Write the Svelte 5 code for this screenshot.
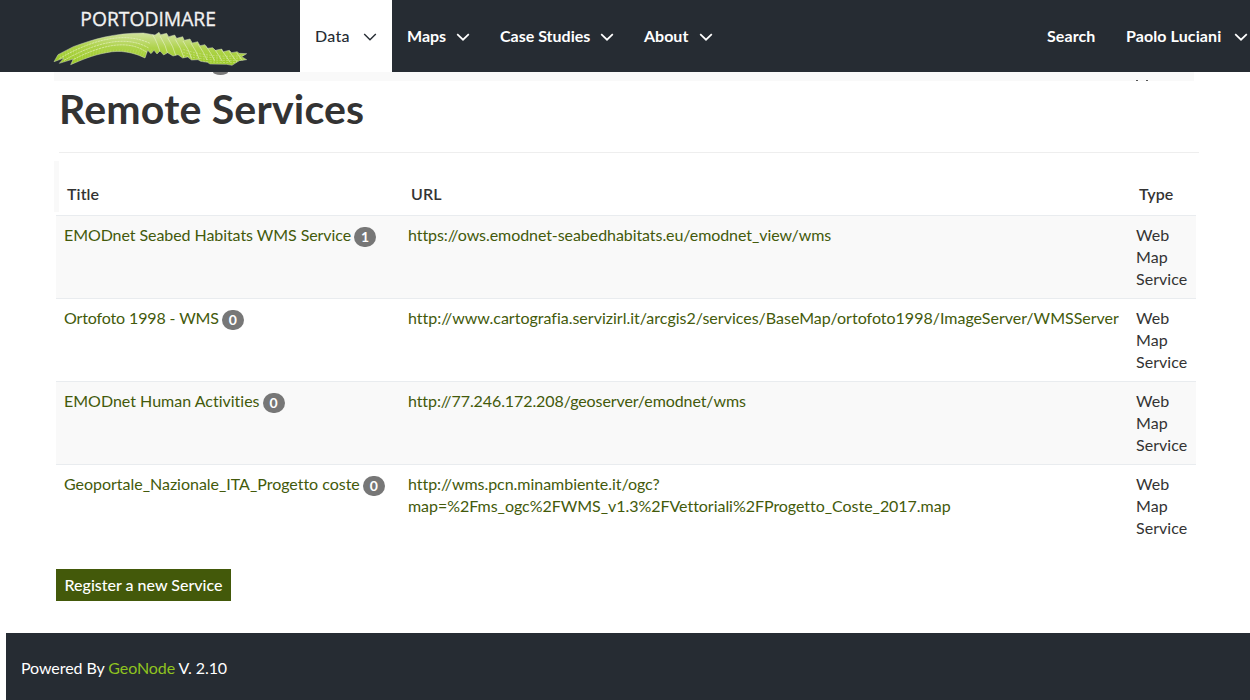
<script>
  const menu = [
    { label: 'Data', active: true, w: 92 },
    { label: 'Maps', w: 93 },
    { label: 'Case Studies', w: 144 },
    { label: 'About', w: 99 }
  ];
  const services = [
    { title: 'EMODnet Seabed Habitats WMS Service', track: -0.07, count: 1, url: ['https://ows.emodnet-seabedhabitats.eu/emodnet_view/wms'], urlTrack: -0.07 },
    { title: 'Ortofoto 1998 - WMS', track: -0.13, count: 0, url: ['http://www.cartografia.servizirl.it/arcgis2/services/BaseMap/ortofoto1998/ImageServer/WMSServer'], urlTrack: 0 },
    { title: 'EMODnet Human Activities', track: 0, count: 0, url: ['http://77.246.172.208/geoserver/emodnet/wms'], urlTrack: -0.09 },
    { title: 'Geoportale_Nazionale_ITA_Progetto coste', track: -0.02, count: 0, url: ['http://wms.pcn.minambiente.it/ogc?', 'map=%2Fms_ogc%2FWMS_v1.3%2FVettoriali%2FProgetto_Coste_2017.map'], urlTrack: -0.035 }
  ];
  const wave = 'M42 185L54 164L100 140C160 118 220 99 310 99L345 105L357 97L362 104L380 100L386 110L404 105L410 115L428 110L433 121L450 117L457 129L473 125L480 137L495 134L503 145L518 143L526 151L545 147L550 155L568 151L575 158L592 155L597 160L620 161L605 170L620 179L598 182L576 196L560 193L510 192L502 187L482 184L474 179L455 180L443 171L428 174L414 164L399 168L383 158L371 165L360 153L351 162L342 151L333 161L323 151L315 174C280 157 240 149 200 158C155 166 125 180 92 194L100 177L58 190L72 174Z';
  const arcs = [0, 1, 2];
  const hatch = Array.from({ length: 34 }, (_, i) => i);
</script>

{#snippet chevron()}
  <svg class="chevron" viewBox="0 0 14 8" aria-hidden="true"><path d="M1.2 1.1L7 6.7L12.8 1.1" /></svg>
{/snippet}

<header>
  <div class="brand">
    <svg viewBox="0 0 660 216" role="img" aria-label="Portodimare">
      <defs>
        <linearGradient id="green" x1="0" y1="1" x2=".15" y2="0">
          <stop offset="0" stop-color="#96c81c" />
          <stop offset=".6" stop-color="#afd34c" />
          <stop offset="1" stop-color="#cfe19a" />
        </linearGradient>
        <clipPath id="waveClip"><path d={wave} /></clipPath>
      </defs>
      <text x="121" y="79" textLength="407" lengthAdjust="spacingAndGlyphs">PORTODIMARE</text>
      <path d={wave} fill="url(#green)" stroke="#cfd9bd" stroke-width="1.5" />
      <g clip-path="url(#waveClip)" fill="none">
        {#each arcs as i}
          <path d={`M${58 + i * 14} ${176 + i * 5}C${150 + i * 10} ${122 + i * 9} ${250 + i * 5} ${92 + i * 10} ${330 - i * 4} ${130 + i * 14}`} stroke="#eff6d4" stroke-width="2.5" stroke-dasharray="7 2" opacity=".7" />
        {/each}
        {#each hatch as i}
          <path d={`M${70 + i * 7.5} 200l${-14 + i * 1.2} -52`} stroke="#edf5cd" stroke-width="1.5" opacity=".28" />
        {/each}
        {#each [0, 1, 2, 3, 4, 5, 6, 7, 8, 9, 10, 11] as i}
          <path d={`M${337 + i * 23} ${103 + i * 5}q17 25 26 ${65 - i * 3}`} stroke="#f0f5dc" stroke-width="2.3" opacity=".7" />
        {/each}
        {#each [0, 1, 2, 3] as i}
          <path d={`M430 ${148 + i * 9}Q510 ${176 + i * 5} 620 ${166 + i * 7}`} stroke="#edf5cd" stroke-width="2" stroke-dasharray="6 4" opacity=".6" />
        {/each}
      </g>
    </svg>
  </div>
  <nav>
    {#each menu as item}
      <a class:active={item.active} style:width={`${item.w}px`}><span>{item.label}</span>{@render chevron()}</a>
    {/each}
  </nav>
  <div class="user">
    <span class="search">Search</span>
    <span class="name">Paolo Luciani</span>{@render chevron()}
  </div>
</header>

<div class="peek"><i></i><b></b><b></b></div>

<main>
  <h1><span>Remote Services</span></h1>
  <div class="head">
    <span>Title</span><span>URL</span><span>Type</span>
  </div>
  {#each services as s}
    <div class="row">
      <div class="title"><a style:letter-spacing={`${s.track}px`}>{s.title}</a><span class="badge">{s.count}</span></div>
      <div class="url" style:letter-spacing={`${s.urlTrack}px`}>{#each s.url as part}<a>{part}</a>{/each}</div>
      <div class="type">Web Map Service</div>
    </div>
  {/each}
  <button>Register a new Service</button>
</main>

<footer><p>Powered By <a>GeoNode</a> V. 2.10</p></footer>

<style>
  :global(body) { background: #fff; overflow: hidden; }
  :global(#app) { font: 16px/22px Lato, sans-serif; font-variant-ligatures: none; color: #333; width: 1250px; height: 700px; overflow: hidden; display: flex; flex-direction: column; }
  header { height: 72px; flex: none; background: #262c33; display: flex; color: #fff; font-weight: 700; }
  .brand { width: 260px; padding-left: 40px; box-sizing: content-box; }
  .brand svg { width: 220px; height: 72px; display: block; }
  .brand text { font: 62px "Open Sans", sans-serif; fill: #f2f2f2; stroke: #f2f2f2; stroke-width: 1; }
  nav { display: flex; }
  nav a { display: flex; align-items: center; justify-content: space-between; box-sizing: border-box; padding: 0 15px; white-space: nowrap; }
  nav span, .user span { margin-top: -1px; }
  nav a.active { background: #fff; color: #262c33; font-weight: 500; }
  nav a.active span { letter-spacing: .3px; }
  .chevron { width: 14px; height: 8px; flex: none; margin-top: 2px; fill: none; stroke: currentColor; stroke-width: 1.7; }
  nav a.active .chevron { stroke-width: 1.4; }
  .user { display: flex; align-items: center; margin-left: auto; padding-right: 2px; white-space: nowrap; letter-spacing: .1px; }
  .search { width: 79px; }
  .name { width: 108px; }
  .peek { height: 9px; flex: none; margin: 0 56px 0 54px; background: #f9f9f9; display: flex; }
  .peek i { width: 15px; height: 3px; margin-left: 159px; background: #777; border-radius: 0 0 50% 50% / 0 0 100% 100%; }
  .peek b { width: 2px; height: 1px; background: #555; margin: 8px 0 0 908px; }
  .peek b + b { margin-left: 8px; }
  main { flex: none; height: 552px; padding: 0 54px 0 56px; display: flex; flex-direction: column; }
  h1 { margin: 0 -3px 0 3px; height: 71px; border-bottom: 1px solid #eee; font-size: 41px; line-height: 55px; font-weight: 700; letter-spacing: .2px; white-space: nowrap; }
  .head, .row { display: grid; grid-template-columns: 344px 728px 68px; width: 1140px; }
  .head { box-sizing: border-box; height: 51px; margin: 8px 0 3px -2px; border-left: 5px solid #f9f9f9; font-weight: 600; line-height: 66px; white-space: nowrap; letter-spacing: .1px; }
  .head span { padding-left: 8px; }
  .row { box-sizing: border-box; height: 83px; border-top: 1px solid #e9ecef; }
  .row:nth-child(odd) { background: #f9f9f9; }
  .row > div { padding: 8px; white-space: nowrap; }
  .row > .title { display: flex; align-items: flex-start; gap: 3px; }
  .row > .type { white-space: normal; letter-spacing: .05px; }
  .row a { color: #435a0b; }
  .url { display: flex; flex-direction: column; }
  .url a { align-self: flex-start; }
  .badge { box-sizing: border-box; width: 22px; height: 20px; margin-top: 3px; border-radius: 10px; background: #777; color: #fff; font-size: 14px; line-height: 20px; font-weight: 700; text-align: center; }
  button { align-self: flex-start; margin-top: 22px; width: 175px; height: 32px; padding: 0 0 2px; border: 0; color: #fff; background: #43590a; font: 500 16px Lato, sans-serif; white-space: nowrap; }
  footer { flex: 1; margin-left: 6px; background: #262c33; color: #fff; }
  footer p { margin: 24px 15px; letter-spacing: -.08px; }
  footer a { color: #8fc31f; }
</style>
